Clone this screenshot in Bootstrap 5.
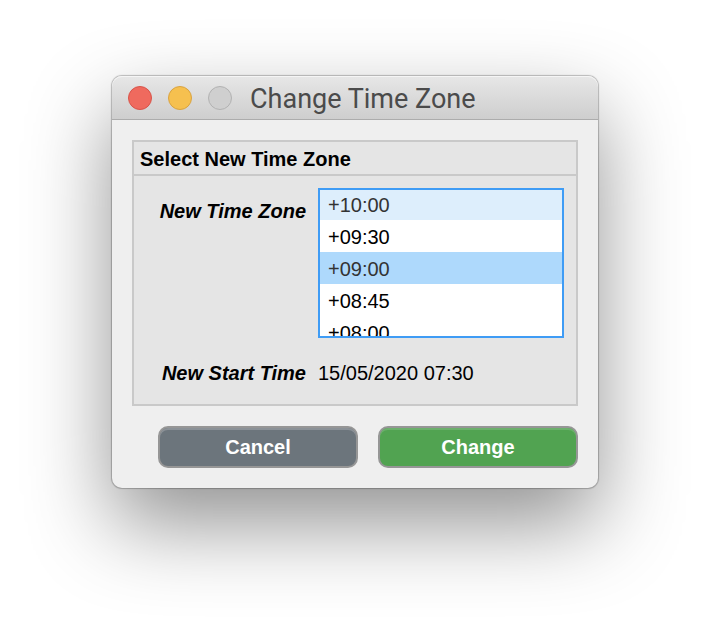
<!DOCTYPE html>
<html lang="en">
<head>
<meta charset="utf-8">
<meta name="viewport" content="width=device-width, initial-scale=1">
<title>Change Time Zone</title>
<link href="https://cdn.jsdelivr.net/npm/bootstrap@5.3.0/dist/css/bootstrap.min.css" rel="stylesheet">
<style>
  body { font: 20px/24px "Liberation Sans", Arial, sans-serif; color: #000; background: #fff; }
  .stage { padding: 76px 20px; }
  .tz-window {
    max-width: 486px; background: #efefef; border-radius: 10px;
    box-shadow: 0 0 1px 1px rgba(0,0,0,.24), 0 36px 84px rgba(0,0,0,.43);
  }
  .titlebar {
    height: 44px; padding: 0 16px; gap: 16px;
    background: linear-gradient(#e7e7e7, #cecece);
    border-bottom: 1px solid #acacac; border-radius: 10px 10px 0 0;
    box-shadow: inset 0 1px 0 #f5f5f5;
  }
  .titlebar h1 { font: 27px/32px Roboto, sans-serif; color: #4b4b4b; padding: 2px 0 0 2px; }
  .light { width: 24px; height: 24px; padding: 0; border: 1px solid; border-radius: 50%; }
  .light-close { background: #ef6a5e; border-color: #d8544a; }
  .light-min { background: #f6c04f; border-color: #d9a341; }
  .light-max { background: #cfcfcf; border-color: #b2b2b2; }
  .content-area { padding: 20px; }
  .panel { background: #e5e5e5; border: 2px solid #c9c9c9; }
  .panel h2 { font-size: 20px; line-height: 24px; font-weight: 700; padding: 5px 6px 3px; border-bottom: 2px solid #c9c9c9; }
  .panel-fields { padding: 12px 12px 19px; row-gap: 23px; }
  .field { gap: 12px; }
  .field-name { flex: 0 0 160px; font-weight: 700; font-style: italic; text-align: right; }
  .field-name-top { padding-top: 11px; }
  .zone-list {
    height: 150px; min-width: 0; padding: 0; border: 2px solid #3f9cf5; border-radius: 0;
    background: #fff; color: #000; outline: 0; overflow-y: auto; scrollbar-width: none;
  }
  .zone-list::-webkit-scrollbar { display: none; }
  .zone-list option { height: 32px; padding: 6px 8px 2px; line-height: 24px; }
  .zone-list option:first-child { height: 30px; padding-top: 4px; }
  .zone-list .current { background: #ddeefc; color: #333; }
  .zone-list option:checked { background: #aed9fc linear-gradient(#aed9fc, #aed9fc); color: #333; }
  .actions { gap: 20px; padding: 20px 0 0 26px; }
  .action {
    flex: 1 1 0; height: 42px; padding: 0; border: 2px solid #969696; border-radius: 10px;
    font-size: 20px; line-height: 24px; font-weight: 700; color: #fff;
  }
  .action-cancel { background: #6c757c; box-shadow: inset 0 2px 0 #8b9197; }
  .action-change { background: #51a351; box-shadow: inset 0 2px 0 #6cb06c; }
</style>
</head>
<body>
<main class="stage min-vh-100">
  <form class="tz-window mx-auto">
    <header class="titlebar d-flex align-items-center">
      <button type="button" class="light light-close" aria-label="Close"></button>
      <button type="button" class="light light-min" aria-label="Minimize"></button>
      <button type="button" class="light light-max" aria-label="Zoom" disabled></button>
      <h1 class="m-0 text-nowrap">Change Time Zone</h1>
    </header>
    <div class="content-area">
      <section class="panel">
        <h2 class="m-0">Select New Time Zone</h2>
        <div class="panel-fields d-flex flex-column">
          <div class="field d-flex align-items-start">
            <label class="field-name field-name-top" for="zone">New Time Zone</label>
            <select class="zone-list flex-fill" id="zone" size="5">
              <option class="current">+10:00</option>
              <option>+09:30</option>
              <option selected>+09:00</option>
              <option>+08:45</option>
              <option>+08:00</option>
            </select>
          </div>
          <div class="field d-flex">
            <label class="field-name" for="start">New Start Time</label>
            <output id="start">15/05/2020 07:30</output>
          </div>
        </div>
      </section>
      <div class="actions d-flex">
        <button type="button" class="action action-cancel">Cancel</button>
        <button type="submit" class="action action-change">Change</button>
      </div>
    </div>
  </form>
</main>
<script src="https://cdn.jsdelivr.net/npm/bootstrap@5.3.0/dist/js/bootstrap.bundle.min.js"></script>
</body>
</html>
